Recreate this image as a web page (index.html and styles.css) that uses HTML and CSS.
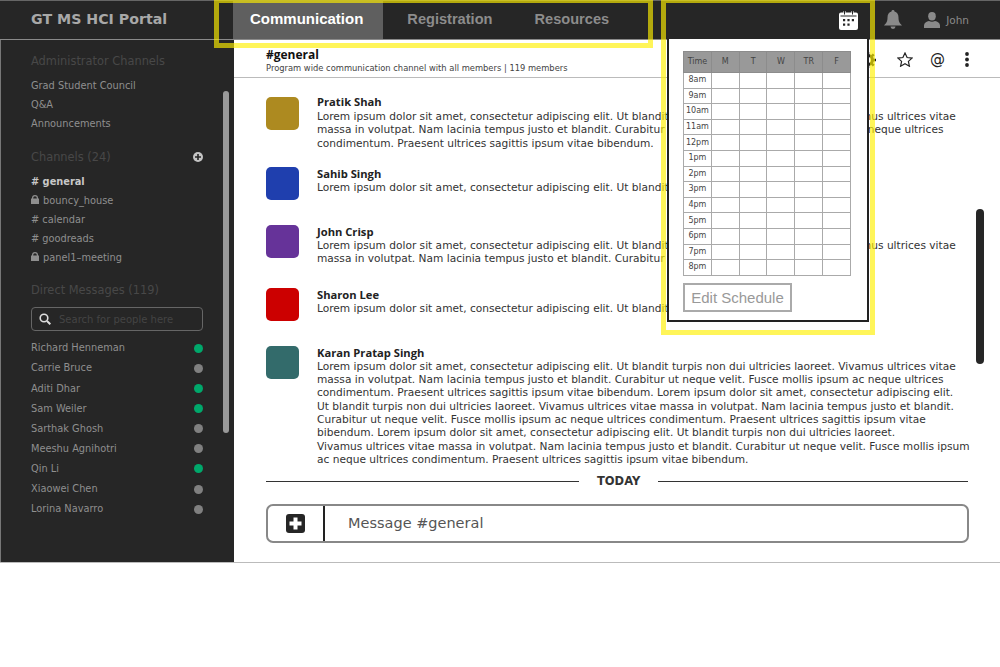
FILE: index.html
```html
<!DOCTYPE html>
<html lang="en">
<head>
    <meta charset="UTF-8">
    <title>GT MS HCI Portal</title>
    <link rel="stylesheet" href="styles.css">
</head>
<body>
    <div class="app">
        <header class="topbar">
            <div class="brand">GT MS HCI Portal</div>
            <nav class="tabs">
                <a class="tab active">Communication</a>
                <a class="tab">Registration</a>
                <a class="tab">Resources</a>
            </nav>
            <div class="top-icons">
                <svg class="icon-cal" width="19" height="20" viewBox="0 0 19 20">
                    <path fill="#fff" d="M2 2.500h2.500V1h2v1.500h6V1h2v1.500H17a2 2 0 0 1 2 2V18a2 2 0 0 1-2 2H2a2 2 0 0 1-2-2V4.500a2 2 0 0 1 2-2z"/>
                    <path fill="#262626" d="M1.500 5.500h16v1h-16zM5 .5h1v4H5zM13 .5h1v4h-1zM4 9h2.200v2.200H4zM8.400 9h2.200v2.200H8.400zM12.800 9H15v2.200h-2.200zM4 13.500h2.200v2.200H4zM8.400 13.500h2.200v2.200H8.400z"/>
                </svg>
                <svg class="icon-bell" width="18" height="19" viewBox="0 0 18 19">
                    <path fill="#8a8a8a" d="M9 0a1.500 1.500 0 0 1 1.500 1.600C13 2.300 14.500 4.500 14.500 7.500c0 4 1 5.500 3.500 8H0c2.500-2.500 3.500-4 3.500-8 0-3 1.500-5.200 4-5.900A1.500 1.500 0 0 1 9 0zM6.500 16.500h5a2.500 2.500 0 0 1-5 0z"/>
                </svg>
                <svg class="icon-user" width="16" height="16" viewBox="0 0 16 16">
                    <ellipse fill="#8a8a8a" cx="8" cy="4.200" rx="3.800" ry="4.200"/>
                    <path fill="#8a8a8a" d="M0 16v-2.500C0 11 2.500 9.500 5 9c1.800 1 4.200 1 6 0 2.500.5 5 2 5 4.500V16z"/>
                </svg>
                <span class="user-name">John</span>
            </div>
        </header>

        <div class="content">
            <aside class="sidebar">
                <h4 class="side-head">Administrator Channels</h4>
                <ul class="side-list">
                    <li>Grad Student Council</li>
                    <li>Q&amp;A</li>
                    <li>Announcements</li>
                </ul>

                <h4 class="side-head head-row">Channels (24)
                    <svg width="10" height="10" viewBox="0 0 10 10">
                        <circle cx="5" cy="5" r="5" fill="#c4c4c4"/>
                        <path fill="#262626" d="M4.200 2h1.600v2.200H8v1.600H5.800V8H4.200V5.800H2V4.200h2.200z"/>
                    </svg>
                </h4>
                <ul class="side-list channels">
                    <li class="current"># general</li>
                    <li><svg class="lock" width="8" height="9" viewBox="0 0 8 9"><path fill="#8f8f8f" d="M1 3.500V3a3 3 0 0 1 6 0v.5h1V9H0V3.500zM2.200 3.500h3.600V3a1.800 1.800 0 0 0-3.600 0z"/></svg> bouncy_house</li>
                    <li># calendar</li>
                    <li># goodreads</li>
                    <li><svg class="lock" width="8" height="9" viewBox="0 0 8 9"><path fill="#8f8f8f" d="M1 3.500V3a3 3 0 0 1 6 0v.5h1V9H0V3.500zM2.200 3.500h3.600V3a1.800 1.800 0 0 0-3.600 0z"/></svg> panel1–meeting</li>
                </ul>

                <h4 class="side-head">Direct Messages (119)</h4>
                <div class="people-search">
                    <svg width="12" height="12" viewBox="0 0 12 12">
                        <circle cx="5" cy="5" r="3.800" fill="none" stroke="#ddd" stroke-width="1.600"/>
                        <path d="M8 8l3.300 3.300" stroke="#ddd" stroke-width="2"/>
                    </svg>
                    <span>Search for people here</span>
                </div>
                <ul class="people">
                    <li>Richard Henneman<i class="dot on"></i></li>
                    <li>Carrie Bruce<i class="dot"></i></li>
                    <li>Aditi Dhar<i class="dot on"></i></li>
                    <li>Sam Weiler<i class="dot on"></i></li>
                    <li>Sarthak Ghosh<i class="dot"></i></li>
                    <li>Meeshu Agnihotri<i class="dot"></i></li>
                    <li>Qin Li<i class="dot on"></i></li>
                    <li>Xiaowei Chen<i class="dot"></i></li>
                    <li>Lorina Navarro<i class="dot"></i></li>
                </ul>
                <div class="side-scroll"></div>
            </aside>

            <main class="main">
                <div class="channel-head">
                    <div>
                        <h2>#general</h2>
                        <p>Program wide communication channel with all members | 119 members</p>
                    </div>
                    <div class="channel-icons">
                        <svg class="icon-gear" width="16" height="16" viewBox="0 0 16 16"><circle cx="8" cy="8" r="4.500" fill="none" stroke="#222" stroke-width="3"/><path stroke="#222" stroke-width="2.500" d="M8 0v3M8 13v3M0 8h3M13 8h3M2.300 2.300l2 2M11.700 11.700l2 2M2.300 13.700l2-2M11.700 4.300l2-2"/></svg>
                        <svg class="icon-star" width="16" height="15" viewBox="0 0 16 15"><path fill="none" stroke="#222" stroke-width="1.200" d="M8 1l2.100 4.500 4.900.6-3.600 3.300 1 4.800L8 11.800l-4.400 2.400 1-4.800L1 6.100l4.900-.6z"/></svg>
                        <span class="at">@</span>
                        <svg width="4" height="15" viewBox="0 0 4 15"><circle cx="2" cy="2" r="1.900" fill="#222"/><circle cx="2" cy="7.500" r="1.900" fill="#222"/><circle cx="2" cy="13" r="1.900" fill="#222"/></svg>
                    </div>
                </div>

                <div class="messages">
                    <div class="msg first">
                        <div class="avatar gold"></div>
                        <div class="msg-body">
                            <h5>Pratik Shah</h5>
                            <p>Lorem ipsum dolor sit amet, consectetur adipiscing elit. Ut blandit turpis non dui ultricies laoreet. Vivamus ultrices vitae<br>
                            massa in volutpat. Nam lacinia tempus justo et blandit. Curabitur ut neque velit. Fusce mollis ipsum ac neque ultrices<br>
                            condimentum. Praesent ultrices sagittis ipsum vitae bibendum.</p>
                        </div>
                    </div>
                    <div class="msg">
                        <div class="avatar blue"></div>
                        <div class="msg-body">
                            <h5>Sahib Singh</h5>
                            <p>Lorem ipsum dolor sit amet, consectetur adipiscing elit. Ut blandit turpis non dui ultricies laoreet.</p>
                        </div>
                    </div>
                    <div class="msg two-line">
                        <div class="avatar purple"></div>
                        <div class="msg-body">
                            <h5>John Crisp</h5>
                            <p>Lorem ipsum dolor sit amet, consectetur adipiscing elit. Ut blandit turpis non dui ultricies laoreet. Vivamus ultrices vitae<br>
                            massa in volutpat. Nam lacinia tempus justo et blandit. Curabitur ut neque velit.</p>
                        </div>
                    </div>
                    <div class="msg">
                        <div class="avatar red"></div>
                        <div class="msg-body">
                            <h5>Sharon Lee</h5>
                            <p>Lorem ipsum dolor sit amet, consectetur adipiscing elit. Ut blandit turpis non dui ultricies laoreet.</p>
                        </div>
                    </div>
                    <div class="msg last">
                        <div class="avatar teal"></div>
                        <div class="msg-body">
                            <h5>Karan Pratap Singh</h5>
                            <p>Lorem ipsum dolor sit amet, consectetur adipiscing elit. Ut blandit turpis non dui ultricies laoreet. Vivamus ultrices vitae<br>
                            massa in volutpat. Nam lacinia tempus justo et blandit. Curabitur ut neque velit. Fusce mollis ipsum ac neque ultrices<br>
                            condimentum. Praesent ultrices sagittis ipsum vitae bibendum. Lorem ipsum dolor sit amet, consectetur adipiscing elit.<br>
                            Ut blandit turpis non dui ultricies laoreet. Vivamus ultrices vitae massa in volutpat. Nam lacinia tempus justo et blandit.<br>
                            Curabitur ut neque velit. Fusce mollis ipsum ac neque ultrices condimentum. Praesent ultrices sagittis ipsum vitae<br>
                            bibendum. Lorem ipsum dolor sit amet, consectetur adipiscing elit. Ut blandit turpis non dui ultricies laoreet.<br>
                            Vivamus ultrices vitae massa in volutpat. Nam lacinia tempus justo et blandit. Curabitur ut neque velit. Fusce mollis ipsum<br>
                            ac neque ultrices condimentum. Praesent ultrices sagittis ipsum vitae bibendum.</p>
                        </div>
                    </div>
                </div>

                <div class="today"><span>TODAY</span></div>

                <div class="composer">
                    <div class="composer-add">
                        <svg width="19" height="19" viewBox="0 0 19 19">
                            <rect width="19" height="19" rx="3" fill="#262626"/>
                            <path fill="#fff" d="M7.500 3.500h4v4h4v4h-4v4h-4v-4h-4v-4h4z"/>
                        </svg>
                    </div>
                    <div class="composer-text">Message #general</div>
                </div>
                <div class="main-scroll"></div>
            </main>
        </div>
    </div>

    <div class="schedule">
        <table>
            <thead>
                <tr><th>Time</th><th>M</th><th>T</th><th>W</th><th>TR</th><th>F</th></tr>
            </thead>
            <tbody>
                <tr><td>8am</td><td></td><td></td><td></td><td></td><td></td></tr>
                <tr><td>9am</td><td></td><td></td><td></td><td></td><td></td></tr>
                <tr><td>10am</td><td></td><td></td><td></td><td></td><td></td></tr>
                <tr><td>11am</td><td></td><td></td><td></td><td></td><td></td></tr>
                <tr><td>12pm</td><td></td><td></td><td></td><td></td><td></td></tr>
                <tr><td>1pm</td><td></td><td></td><td></td><td></td><td></td></tr>
                <tr><td>2pm</td><td></td><td></td><td></td><td></td><td></td></tr>
                <tr><td>3pm</td><td></td><td></td><td></td><td></td><td></td></tr>
                <tr><td>4pm</td><td></td><td></td><td></td><td></td><td></td></tr>
                <tr><td>5pm</td><td></td><td></td><td></td><td></td><td></td></tr>
                <tr><td>6pm</td><td></td><td></td><td></td><td></td><td></td></tr>
                <tr><td>7pm</td><td></td><td></td><td></td><td></td><td></td></tr>
                <tr><td>8pm</td><td></td><td></td><td></td><td></td><td></td></tr>
            </tbody>
        </table>
        <button class="edit-btn">Edit Schedule</button>
    </div>

    <div class="callout callout-nav"></div>
    <div class="callout callout-cal"></div>
</body>
</html>
```

FILE: styles.css
```css
body {
    margin: 0;
    background: #fff;
    color: #222;
    font-family: "DejaVu Sans", sans-serif;
    position: relative;
}

h2, h4, h5, p, ul {
    margin: 0;
    padding: 0;
}

ul {
    list-style: none;
}

.app {
    height: 563px;
    display: flex;
    flex-direction: column;
    border-bottom: 1px solid #bbb;
    box-sizing: border-box;
}

/* top bar */
.topbar {
    height: 40px;
    flex: none;
    display: flex;
    background: #262626;
    border-top: 1px solid #666;
    border-bottom: 1px solid #8a8a8a;
    box-sizing: border-box;
}

.brand {
    width: 233px;
    padding: 0 0 0 31px;
    box-sizing: border-box;
    font-size: 14.200px;
    font-weight: bold;
    line-height: 37px;
    color: #a8a8a8;
}

.tabs {
    display: flex;
}

.tab {
    padding: 0 21px;
    font-family: "Liberation Sans", sans-serif;
    font-size: 14.600px;
    font-weight: bold;
    line-height: 36px;
    color: #8c8c8c;
}

.tab.active {
    padding: 0 20px 0 17px;
    margin-right: 3px;
    font-size: 15px;
    line-height: 35px;
    background: #5f5f5f;
    color: #fff;
}

.top-icons {
    margin-left: auto;
    display: flex;
    align-items: center;
    padding: 0 31px 1px 0;
}

.icon-cal {
    margin-right: 26px;
}

.icon-bell {
    margin-right: 22px;
}

.user-name {
    margin-left: 6px;
    font-size: 10.500px;
    color: #8a8a8a;
}

.content {
    flex: 1;
    display: flex;
    min-height: 0;
}

/* sidebar */
.sidebar {
    width: 234px;
    flex: none;
    position: relative;
    padding: 14px 31px 0 30px;
    box-sizing: border-box;
    background: #262626;
    border-left: 1px solid #777;
    color: #8f8f8f;
    font-size: 9.800px;
}

.side-head {
    font-size: 11.400px;
    font-weight: normal;
    line-height: 14px;
    color: #484848;
}

.head-row {
    display: flex;
    justify-content: space-between;
    align-items: center;
}

.side-list {
    margin: 9px 0 17px;
}

.side-list.channels {
    margin: 9px 0 16px;
}

.side-list li {
    height: 18.800px;
    line-height: 18.800px;
}

.side-list .current {
    color: #c8c8c8;
    font-weight: bold;
}

.lock {
    margin-right: 1px;
}

.people-search {
    height: 22px;
    margin: 10px 0 7px;
    padding-left: 7px;
    display: flex;
    align-items: center;
    gap: 8px;
    border: 1px solid #666;
    border-radius: 4px;
    color: #444;
    font-size: 10px;
}

.people li {
    height: 20.100px;
    line-height: 20.100px;
    display: flex;
    justify-content: space-between;
    align-items: center;
}

.dot {
    width: 9px;
    height: 9px;
    border-radius: 50%;
    background: #808080;
}

.dot.on {
    background: #00a86b;
}

.side-scroll {
    position: absolute;
    left: 222px;
    top: 51px;
    width: 6px;
    height: 342px;
    border-radius: 3px;
    background: #999;
}

/* main column */
.main {
    flex: 1;
    min-width: 0;
    position: relative;
    display: flex;
    flex-direction: column;
}

.channel-head {
    height: 38px;
    flex: none;
    display: flex;
    justify-content: space-between;
    padding: 8px 31px 0 32px;
    box-sizing: border-box;
    border-bottom: 1px solid #bbb;
}

.channel-head h2 {
    font-family: "Open Sans", sans-serif;
    font-size: 12px;
    line-height: 14px;
    color: #111;
}

.channel-head p {
    font-size: 8.350px;
    line-height: 12px;
    color: #444;
}

.channel-icons {
    display: flex;
    align-items: flex-start;
    gap: 18px;
    padding-top: 4px;
}

.icon-gear {
    margin-right: 3px;
}

.icon-star {
    margin-right: -1px;
}

.at {
    margin-right: 2px;
    font-size: 15px;
    line-height: 15px;
    color: #222;
}

.messages {
    flex: 1;
    padding: 19px 0 0 32px;
}

.msg {
    display: flex;
    margin-bottom: 25px;
}

.msg.first {
    margin-bottom: 17px;
}

.msg.first .msg-body {
    margin-top: -2px;
}

.msg.first p {
    margin-top: 1px;
}

.msg.two-line {
    margin-bottom: 22.400px;
}

.msg.last {
    margin-bottom: 0;
}

.avatar {
    width: 33px;
    height: 33px;
    flex: none;
    margin-right: 18px;
    border-radius: 5px;
}

.gold { background: #ad8a20; }
.blue { background: #1f3fae; }
.purple { background: #663399; }
.red { background: #cc0000; }
.teal { background: #336b6b; }

.msg-body h5 {
    font-family: "Open Sans", sans-serif;
    font-size: 11.200px;
    line-height: 14px;
    color: #222;
}

.msg-body p {
    font-size: 10.620px;
    line-height: 13.300px;
    white-space: nowrap;
    color: #333;
}

.today {
    margin: 0 32px;
    display: flex;
    align-items: center;
    gap: 18px;
    font-size: 11.500px;
    font-weight: bold;
    color: #333;
}

.today::before,
.today::after {
    content: "";
    flex: 1;
    height: 1px;
    background: #333;
}

.today::before {
    flex: none;
    width: 313px;
}

.composer {
    height: 39px;
    margin: 16px 31px 19px 32px;
    flex: none;
    display: flex;
    box-sizing: border-box;
    border: 2px solid #888;
    border-radius: 7px;
}

.composer-add {
    width: 55px;
    display: flex;
    align-items: center;
    justify-content: center;
    border-right: 2px solid #222;
}

.composer-text {
    padding-left: 23px;
    font-size: 14.500px;
    line-height: 35px;
    color: #555;
}

.main-scroll {
    position: absolute;
    left: 742px;
    top: 169px;
    width: 8px;
    height: 155px;
    border-radius: 4px;
    background: #262626;
}

/* schedule popup, opened from the calendar icon */
.schedule {
    position: absolute;
    left: 667px;
    top: 39px;
    width: 202px;
    height: 283px;
    padding: 12px 14px 0;
    box-sizing: border-box;
    background: #fff;
    border: 2px solid #222;
    border-top: none;
}

.schedule table {
    border-collapse: collapse;
    table-layout: fixed;
    width: 168px;
    font-size: 8px;
    color: #444;
}

.schedule th,
.schedule td {
    padding: 0;
    border: 1px solid #aaa;
    text-align: center;
    height: 14.600px;
    line-height: 12px;
    font-weight: normal;
}

.schedule th {
    height: 20px;
    background: #999;
    border-color: #8c8c8c;
}

.edit-btn {
    display: block;
    width: 109px;
    height: 29px;
    margin-top: 7px;
    padding: 0;
    background: #fff;
    border: 2px solid #aaa;
    font-family: "Liberation Sans", sans-serif;
    font-size: 15px;
    color: #999;
}

/* yellow annotations drawn over the mockup */
.callout {
    position: absolute;
    box-sizing: border-box;
    border: 5px solid rgba(255, 240, 0, 0.65);
    border-top-width: 3px;
    pointer-events: none;
}

.callout-nav {
    left: 214px;
    top: 0;
    width: 439px;
    height: 48px;
}

.callout-cal {
    left: 661px;
    top: 0;
    width: 214px;
    height: 335px;
}
```
